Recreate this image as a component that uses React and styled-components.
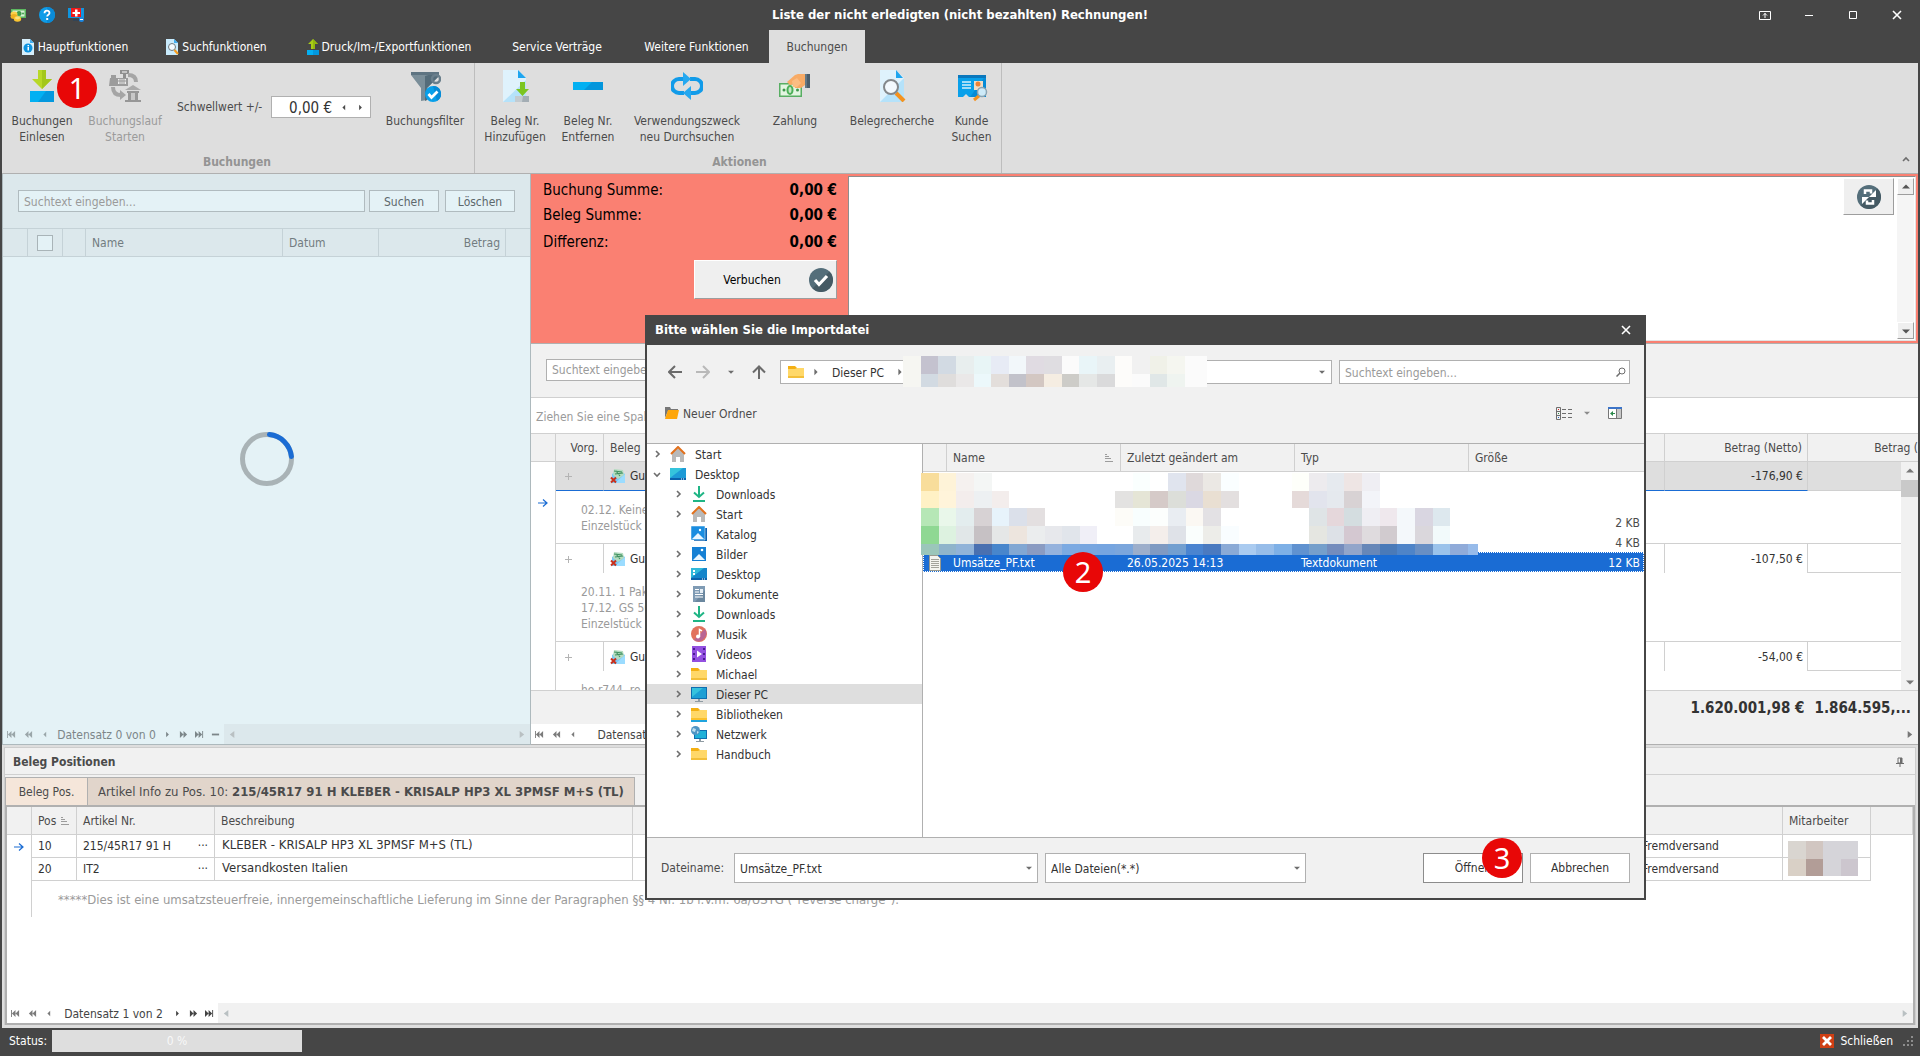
import React from 'react';
import styled, { createGlobalStyle, css } from 'styled-components';

const dark = '#464646';
const chrome = '#dedede';
const panel = '#f1f1f1';
const line = '#d0d0d0';
const frame = '#b0b0b0';
const text = '#4b4b4b';
const muted = '#9a9a9a';
const blue = '#1a6cd4';
const salmon = '#fa8072';
const busyHead = '#dce8ec';
const busyBody = '#e4f2f6';
const busyLine = '#c5d2d7';
const fontFamily = "'DejaVu Sans Condensed', 'Noto Sans', sans-serif";

/* ---------- icons ---------- */

const Svg = ({ w = 16, h = w, box, children }) => (
  <svg
    width={w}
    height={h}
    viewBox={box || `0 0 ${w} ${h}`}
    fill="none"
    aria-hidden="true"
  >
    {children}
  </svg>
);

const MoneyIcon = () => (
  <Svg>
    <path d="M1 2h15v9H1z" fill="#5cb860" />
    <path d="M2.500 3.500h12v6h-12z" fill="#d9f2d6" />
    <circle cx="9" cy="6.500" r="2.500" fill="#3f9d4b" />
    <circle cx="13" cy="6.500" r="1" fill="#3f9d4b" />
    <ellipse cx="4" cy="7" rx="3.500" ry="2.500" fill="#fbd04a" />
    <ellipse cx="4" cy="9.500" rx="3.500" ry="2.500" fill="#eeb022" />
    <ellipse cx="7.500" cy="12" rx="3.700" ry="2.700" fill="#fbc531" />
    <ellipse cx="7.500" cy="11" rx="2.500" ry="1.400" fill="#fde07c" />
  </Svg>
);

const HelpIcon = () => (
  <Svg>
    <circle cx="8" cy="8" r="8" fill="#0e9ce8" />
    <path d="M8 0a8 8 0 0 1 0 16z" fill="#0a8ad6" />
    <path
      d="M5.500 6.200c0-3.400 5-3.300 5-.3 0 1.800-2.300 1.900-2.300 3.600"
      stroke="#fff"
      strokeWidth="1.800"
    />
    <path d="M7.200 11h2v2h-2z" fill="#fff" />
  </Svg>
);

const SupportIcon = () => (
  <Svg>
    <path d="M0 1h16v10H0z" fill="#0f95df" />
    <path d="M5 12h6v2H5z" fill="#345" />
    <path d="M3 1h10v9H3z" fill="#f01818" />
    <path d="M7 2.500h2.500V5H12v2H9.500v2.500H7V7H4.500V5H7z" fill="#fff" />
    <circle cx="13.500" cy="12.500" r="2.500" fill="#1b86e0" />
    <path d="M12 12h3v1h-3z" fill="#fff" />
  </Svg>
);

const PageInfoIcon = () => (
  <Svg>
    <path d="M1 0h8l4 4v12H1z" fill="#d6effc" />
    <path d="M9 0l4 4H9z" fill="#41aef0" />
    <circle cx="7" cy="9" r="4.500" fill="#0c93e0" />
    <path d="M6.500 6h1.500v1.200H6.500zM6.500 8h1.500v3.500H6.500z" fill="#fff" />
  </Svg>
);

const PageSearchIcon = () => (
  <Svg>
    <path d="M1 0h8l4 4v12H1z" fill="#c9ebfc" />
    <path d="M9 0l4 4H9z" fill="#41aef0" />
    <circle cx="7" cy="8" r="3.500" fill="#f4fbff" stroke="#6d7a80" />
    <path d="M9.500 11l3.500 4" stroke="#f59a1b" strokeWidth="2.200" />
  </Svg>
);

const ExportIcon = () => (
  <Svg>
    <path d="M8 0l5 5H10v5H6V5H3z" fill="#a8cc18" />
    <path d="M8 0l5 5H10v5H8z" fill="#93b80d" />
    <path d="M2 11h6v5H2z" fill="#03b0f3" />
    <path d="M8 11h6v5H8z" fill="#0398de" />
  </Svg>
);

const ImportIcon = () => (
  <Svg w={32}>
    <path d="M12 0h8v9h6l-10 10L6 9h6z" fill="#b8d826" />
    <path d="M16 0h4v9h6l-10 10z" fill="#a3c71b" />
    <path d="M4 21h24v11H4z" fill="#02b0f2" />
    <path d="M20 21h8v11H12z" fill="#0398de" />
  </Svg>
);

const RunIcon = () => (
  <Svg w={32}>
    <path d="M11 0h9v4h-9zM14 4h3v4h-3z" fill="#8f8f8f" />
    <path d="M13 1h5v2h-5z" fill="#c4c4c4" />
    <path d="M2 5h5v3H2zM1 8h18v8H0z" fill="#9c9c9c" />
    <path d="M9 9h8v5H9z" fill="#ededed" />
    <path d="M11 9v5M13 9v5M15 9v5M9 11h8" stroke="#999" />
    <path d="M19 5c6 0 8 3 8 7" stroke="#a5a5a5" strokeWidth="4" />
    <path d="M4 17c0 6 3 8 8 8" stroke="#a5a5a5" strokeWidth="4" />
    <path d="M11 20l6 5-6 5z" fill="#a5a5a5" />
    <path d="M24 15l8 5H16z" fill="#aaa" />
    <path d="M18 21h12v2H18zM19 23h3v7h-3zM26 23h3v7h-3zM16 30h16v2H16z" fill="#979797" />
    <path d="M22 23h4v7h-4z" fill="#c8c8c8" />
  </Svg>
);

const FilterIcon = () => (
  <Svg w={32}>
    <path d="M2 2h28v4L18 18v12l-6 1V18L2 5z" fill="#7a8e99" />
    <path d="M16 6l14-4v4L18 18v12l-2 1z" fill="#546c7a" />
    <path d="M2 2h28v3H2z" fill="#5e7482" />
    <circle cx="27" cy="9" r="4" stroke="#6a7f8c" strokeWidth="2.500" />
    <circle cx="24" cy="24" r="8" fill="#08a0ea" />
    <path d="M24 16a8 8 0 0 1 4 15z" fill="#078bd6" />
    <path d="M19.500 24l3 3.500 6-6" stroke="#fff" strokeWidth="2.800" />
  </Svg>
);

const PageAddIcon = () => (
  <Svg w={32}>
    <path d="M4 0h15l8 8v24H4z" fill="#dff2fc" />
    <path d="M27 10v22H4z" fill="#b5e2fa" />
    <path d="M19 0l8 8h-8z" fill="#1ea5ef" />
    <path d="M21 12h5v7h4l-6.500 7L17 19h4z" fill="#7cc520" />
    <path d="M16 26h14v6H16z" fill="#c3cbd0" />
    <path d="M24 26h6v6h-7z" fill="#a3adb4" />
  </Svg>
);

const MinusIcon = () => (
  <Svg w={32}>
    <path d="M1 12h30v8H1z" fill="#02b0f2" />
    <path d="M20 12h11v8H12z" fill="#0396dc" />
  </Svg>
);

const LoopIcon = () => (
  <Svg w={32}>
    <path d="M13 23H8a7 7 0 0 1 0-14h6" stroke="#119be9" strokeWidth="4" />
    <path d="M19 9h5a7 7 0 0 1 0 14h-5" stroke="#119be9" strokeWidth="4" />
    <path d="M12 2l8 7-8 7z" fill="#25a8f0" />
    <path d="M20 16l-8 7 8 7z" fill="#25a8f0" />
  </Svg>
);

const PaymentIcon = () => (
  <Svg w={32}>
    <path d="M0 13h23v14H0z" fill="#58ae63" />
    <path d="M1.500 14.500h20v11h-20z" fill="#e3f5e1" />
    <ellipse cx="11" cy="20" rx="3.500" ry="5" fill="#4caf58" />
    <ellipse cx="11" cy="20" rx="1.500" ry="3" fill="#c6e8c6" />
    <circle cx="5" cy="20" r="1.500" fill="#3d984b" />
    <circle cx="18.500" cy="20" r="1.500" fill="#3d984b" />
    <path d="M8 12l8-7 3-1h7v11l-4 3h-6l-1-4-4 1z" fill="#f8ab66" />
    <path d="M13 11l5-3 4 5-4 4h-4z" fill="#fbbd83" />
    <path d="M26 4h5v14h-5z" fill="#4a5d6b" />
    <path d="M26 4h2v14h-2z" fill="#647886" />
  </Svg>
);

const ResearchIcon = () => (
  <Svg w={32}>
    <path d="M4 0h16l8 8v24H4z" fill="#dff2fc" />
    <path d="M28 8v24H4z" fill="#b5e2fa" />
    <path d="M20 0l7 8h-7z" fill="#1ea5ef" />
    <path d="M20 23l8 8" stroke="#f5921e" strokeWidth="4" />
    <circle cx="15" cy="17" r="7" fill="#f3f9fd" stroke="#84888b" strokeWidth="2" />
  </Svg>
);

const CustomerIcon = () => (
  <Svg w={32}>
    <path d="M2 5h28v22H2z" fill="#09a0ea" />
    <path d="M30 5v22H14z" fill="#078bd6" />
    <path d="M2 5h28v3H2z" fill="#0b78bd" />
    <path d="M6 12h9M6 15h9M6 18h9" stroke="#d6f0fc" strokeWidth="1.500" />
    <path d="M18 11h9v9h-9z" fill="#f2ddc5" />
    <circle cx="22" cy="14" r="2.500" fill="#ee8336" />
    <path d="M7 27l3-3 3 3" fill="#dedede" />
    <path d="M18 30l6-5" stroke="#f5921e" strokeWidth="3" />
    <circle cx="26" cy="22" r="4.500" fill="#cdeaf8" stroke="#8aa4b3" strokeWidth="1.500" />
  </Svg>
);

const RibbonModeIcon = () => (
  <Svg w={12} h={10}>
    <path d="M.5 1.500h11v8H.5z" stroke="#fff" />
    <path d="M6 3v5M4 5.500l2-2 2 2" stroke="#fff" />
  </Svg>
);
const MinimizeIcon = () => (
  <Svg w={10}>
    <path d="M1 5.500h8" stroke="#fff" />
  </Svg>
);
const MaximizeIcon = () => (
  <Svg w={10}>
    <path d="M1.500 1.500h7v7h-7z" stroke="#fff" />
  </Svg>
);
const CloseIcon = () => (
  <Svg w={10}>
    <path d="M1 1l8 8M9 1L1 9" stroke="#fff" strokeWidth="1.600" />
  </Svg>
);

const CheckCircleIcon = () => (
  <Svg w={24}>
    <circle cx="12" cy="12" r="12" fill="#546e7a" />
    <path d="M20.500 3.500a12 12 0 0 1-17 17z" fill="#455a64" />
    <path d="M6 12l4 4.500 8-8.500" stroke="#fff" strokeWidth="3.200" />
  </Svg>
);

const RefreshIcon = () => (
  <Svg w={24}>
    <circle cx="12" cy="12" r="12" fill="#546e7a" />
    <path d="M20.500 3.500a12 12 0 0 1-17 17z" fill="#455a64" />
    <path d="M8 9V5.500h6v3" stroke="#fff" strokeWidth="2.500" />
    <path d="M12 12h7V5z" fill="#fff" />
    <path d="M16 15v3.500h-6v-3" stroke="#fff" strokeWidth="2.500" />
    <path d="M12 12H5v7z" fill="#fff" />
  </Svg>
);

const glyphs = {
  first: 'M0 0h1v8H0zM5 0v8L1 4zM9 0v8L5 4z',
  prevPage: 'M5 0v8L1 4zM9 0v8L5 4z',
  prev: 'M6 0v8L2 4z',
  next: 'M3 0v8l4-4z',
  nextPage: 'M1 0v8l4-4zM5 0v8l4-4z',
  last: 'M0 0v8l4-4zM4 0v8l4-4zM8 0h1v8H8z',
  minus: 'M1 3h8v2H1z',
  up: 'M0 6h10L5 1z',
  down: 'M0 2h10L5 7z',
  left: 'M7 0v8L2 4z',
  right: 'M3 0v8l5-4z',
};
const Glyph = ({ name, size = 8, color = 'currentColor' }) => (
  <Svg w={size} h={size} box="0 0 10 8">
    <path d={glyphs[name]} fill={color} />
  </Svg>
);

const SortIcon = () => (
  <Svg w={9} h={8}>
    <path d="M0 .5h2M0 2.500h4M0 4.500h6M0 7.500h8" stroke="#9c9c9c" />
  </Svg>
);

const ArrowIcon = ({ color = '#6b6b6b', dir = 'left' }) => (
  <Svg w={14}>
    <path
      d={
        dir === 'up'
          ? 'M7 14V2M1 7.500l6-6 6 6'
          : dir === 'left'
          ? 'M14 7H1M7 1L1 7l6 6'
          : 'M0 7h13M7 1l6 6-6 6'
      }
      stroke={color}
      strokeWidth="2"
    />
  </Svg>
);

const RowArrow = () => (
  <Svg w={10} h={8}>
    <path d="M0 4h9M5 .5L9 4 5 7.500" stroke={blue} strokeWidth="1.200" />
  </Svg>
);

const ChevronIcon = ({ open }) => (
  <Svg w={8}>
    <path
      d={open ? 'M1 3l3 3 3-3' : 'M3 1l3 3-3 3'}
      stroke="#6d6d6d"
      strokeWidth="1.600"
    />
  </Svg>
);

const SearchIcon = () => (
  <Svg w={10}>
    <circle cx="6" cy="4" r="3" stroke="#6d6d6d" />
    <path d="M4 6L.5 9.500" stroke="#6d6d6d" strokeWidth="1.500" />
  </Svg>
);

const MailIcon = () => (
  <Svg>
    <path d="M2 6l6-4 7 4v9H2z" fill="#7cc8f4" />
    <path d="M15 6v9H5z" fill="#9bdcff" />
    <path d="M4 1l9 1 1 5-6 4-5-4z" fill="#b5dcc0" />
    <path d="M4 3l8 1M5 6l8-1M6 3l4 5" stroke="#3f9160" strokeWidth="1.200" />
    <path d="M1 9.500l5 5M6 9.500l-5 5" stroke="#c9301c" strokeWidth="2" />
  </Svg>
);

const PlusIcon = () => (
  <Svg w={8}>
    <path d="M4.500 1v7M1 4.500h7" stroke="#b4b4b4" />
  </Svg>
);

const NewFolderIcon = () => (
  <Svg w={14} h={12}>
    <path d="M0 0h5l1 2h7v2H3L0 11z" fill="#777" />
    <path d="M3 3h11l-2 9H0z" fill="#fea60a" />
  </Svg>
);

const ViewIcon = () => (
  <Svg w={17} h={13}>
    <path d="M.5 .5h4v12h-4zM.5 4.500h4M.5 8.500h4" stroke="#6d6d6d" />
    <path d="M2 2h1v1H2z" fill="#d22" />
    <path d="M2 6h1v1H2z" fill="#2a8a4a" />
    <path d="M2 10h1v1H2z" fill="#26c" />
    <path d="M6 2.500h4M12 2.500h4M6 6.500h4M12 6.500h4M6 10.500h4M12 10.500h4" stroke="#6d6d6d" />
  </Svg>
);

const PreviewIcon = () => (
  <Svg w={14} h={12}>
    <path d="M.5 1.500h13v10H.5z" fill="#fff" stroke="#777" />
    <path d="M9 2h4v9H9z" fill="#c8c8c8" />
    <path d="M8.500 2v9" stroke="#777" />
    <path d="M0 0h14v2H0z" fill="#3c74c8" />
    <path d="M2 6.500l3-2.500v5zM4 6h3v1H4z" fill="#2b8a4b" />
  </Svg>
);

const PinIcon = () => (
  <Svg w={8} h={10}>
    <path d="M2 1h4v5H2z" stroke="#6d6d6d" />
    <path d="M4 1h2v5H4zM0 6h8v1H0zM3.500 7h1v3h-1z" fill="#6d6d6d" />
  </Svg>
);

const ExitIcon = () => (
  <Svg w={14}>
    <path d="M0 0h14v14H0z" fill="#cf3f13" />
    <path d="M3 3l8 8M11 3l-8 8" stroke="#fff" strokeWidth="2.800" />
  </Svg>
);

const GripIcon = () => (
  <Svg w={10}>
    <path
      d="M8 0h2v2H8zM8 4h2v2H8zM4 4h2v2H4zM8 8h2v2H8zM4 8h2v2H4zM0 8h2v2H0z"
      fill="#8d8d8d"
    />
  </Svg>
);

const FolderIcon = ({ lib }) => (
  <Svg>
    <path d="M0 2h7l2 2h7v10H0z" fill="#f4b013" />
    <path d="M0 5h7l2-1h7v9H0z" fill="#ffd869" />
    <path d="M0 12h16v2H0z" fill={lib ? '#fbc12d' : '#f3bf3a'} />
    {lib && <path d="M0 14h16v2H0z" fill="#20a4de" />}
  </Svg>
);

const treeIcons = {
  home: () => (
    <Svg>
      <path d="M2 7l6-5 6 5v9h-4v-5H6v5H2z" fill="#b9b9b9" />
      <path d="M1 8l7-7 7 7" stroke="#e2711d" strokeWidth="2" />
    </Svg>
  ),
  desktop: () => (
    <Svg>
      <path d="M0 2h16v12H0z" fill="#1d9ad6" />
      <path d="M0 2h13L0 12z" fill="#35c4dc" />
      <path d="M0 12h16v2H0z" fill="#0b62ac" />
      <path d="M11 12.500h1v1h-1zM13 12.500h1v1h-1z" fill="#fff" />
    </Svg>
  ),
  desktop2: () => (
    <Svg>
      <path d="M0 2h16v12H0z" fill="#1585ca" />
      <path d="M0 2h13L0 12z" fill="#31b9da" />
      <path d="M0 12h16v2H0z" fill="#0b62ac" />
      <path d="M2 4h2v2H2zM2 7h2v2H2z" fill="#fff" />
      <path d="M11 12.500h1v1h-1zM13 12.500h1v1h-1z" fill="#fff" />
    </Svg>
  ),
  download: () => (
    <Svg>
      <path d="M8 0v11M3 6.500L8 11l5-4.500M2 15h12" stroke="#1fb585" strokeWidth="2" />
    </Svg>
  ),
  catalog: () => (
    <Svg>
      <path d="M3 2h13v13H3z" fill="#0d62b0" />
      <path d="M0 0h14v14H0z" fill="#1a8de0" stroke="#fff" strokeWidth=".5" />
      <path d="M1 13l6-6 6 6z" fill="#e9f6ff" />
      <circle cx="9" cy="4" r="1.200" fill="#fff" />
    </Svg>
  ),
  picture: () => (
    <Svg>
      <path d="M1 1h14v14H1z" fill="#1580d4" />
      <path d="M2 14l6-6 6 6z" fill="#e9f6ff" />
      <circle cx="11" cy="4" r="1.300" fill="#fff" />
    </Svg>
  ),
  document: () => (
    <Svg>
      <path d="M2 0h12v16H2z" fill="#7f9bb4" />
      <path d="M14 4v12H4z" fill="#6b879f" />
      <path d="M4 3.500h4M4 6h4M4 8.500h8M4 11h8" stroke="#fff" strokeWidth="1.200" />
      <path d="M9 3h3v4H9z" fill="#e6eef5" />
    </Svg>
  ),
  music: () => (
    <Svg>
      <circle cx="8" cy="8" r="8" fill="#e2725d" />
      <path d="M14 3a8 8 0 0 1-11 11z" fill="#b96594" />
      <circle cx="7" cy="10.500" r="2" fill="#fff" />
      <path d="M8.500 11V3.500l2.500 1.300" stroke="#fff" strokeWidth="1.500" />
    </Svg>
  ),
  video: () => (
    <Svg>
      <path d="M1 0h14v16H1z" fill="#9350e0" />
      <path d="M2 2h2v2H2zM2 7h2v2H2zM2 12h2v2H2zM12 2h2v2h-2zM12 7h2v2h-2zM12 12h2v2h-2z" fill="#4b1d94" />
      <path d="M6 4.500l5 3.500-5 3.500z" fill="#fff" />
    </Svg>
  ),
  folder: () => <FolderIcon />,
  library: () => <FolderIcon lib />,
  pc: () => (
    <Svg>
      <path d="M0 1h16v12H0z" fill="#0f6eb0" />
      <path d="M1 2h14v10H1z" fill="#1d9fd4" />
      <path d="M1 2h11L1 11z" fill="#36c2dd" />
      <path d="M7 13h2v2H7zM4 15h8v1H4z" fill="#8f9ba3" />
    </Svg>
  ),
  network: () => (
    <Svg>
      <path d="M3 4h13v9H3z" fill="#0f6eb0" />
      <path d="M4 5h11v7H4z" fill="#1fb0d8" />
      <path d="M8 13h2v2H8zM5 15h8v1H5z" fill="#8f9ba3" />
      <circle cx="4.500" cy="4.500" r="4.500" fill="#4f95c4" />
      <path d="M2 2l3 1-1 3-3-1zM6 5l2 1-2 2z" fill="#bfe0f0" />
    </Svg>
  ),
};

const TextFileIcon = () => (
  <Svg w={12} h={16}>
    <path d="M.5 .5h8l3 3v12H.5z" fill="#f4f4ef" stroke="#9a9a8e" />
    <path d="M2 4.500h8M2 6.500h8M2 8.500h8M2 10.500h8M2 12.500h8" stroke="#a3a39b" />
  </Svg>
);

/* ---------- data ---------- */

const tabs = [
  { label: 'Hauptfunktionen', icon: PageInfoIcon, width: 143 },
  { label: 'Suchfunktionen', icon: PageSearchIcon, width: 140 },
  { label: 'Druck/Im-/Exportfunktionen', icon: ExportIcon, width: 204 },
  { label: 'Service Verträge', width: 134 },
  { label: 'Weitere Funktionen', width: 145 },
  { label: 'Buchungen', width: 96, active: true },
];

const actions = [
  { lines: ['Beleg Nr.', 'Hinzufügen'], icon: PageAddIcon, width: 72 },
  { lines: ['Beleg Nr.', 'Entfernen'], icon: MinusIcon, width: 74 },
  { lines: ['Verwendungszweck', 'neu Durchsuchen'], icon: LoopIcon, width: 124 },
  { lines: ['Zahlung'], icon: PaymentIcon, width: 92 },
  { lines: ['Belegrecherche'], icon: ResearchIcon, width: 102 },
  { lines: ['Kunde', 'Suchen'], icon: CustomerIcon, width: 57 },
];

const sums = ['Buchung Summe:', 'Beleg Summe:', 'Differenz:'];

const bookings = [
  {
    net: '-176,90 €',
    gross: '-210,51 €',
    selected: true,
    notes: ['02.12. Keine Rückmeldung', 'Einzelstück'],
  },
  {
    net: '-107,50 €',
    gross: '-127,93 €',
    notes: ['20.11. 1 Paket', '17.12. GS 50', 'Einzelstück'],
  },
  { net: '-54,00 €', gross: '-64,26 €', notes: ['ho r744, ro'] },
];

const positions = [
  { pos: 10, article: '215/45R17 91 H', name: 'KLEBER - KRISALP HP3 XL 3PMSF M+S (TL)', current: true },
  { pos: 20, article: 'IT2', name: 'Versandkosten Italien' },
];

const tree = [
  { label: 'Start', icon: 'home' },
  { label: 'Desktop', icon: 'desktop', open: true },
  { label: 'Downloads', icon: 'download', sub: true },
  { label: 'Start', icon: 'home', sub: true },
  { label: 'Katalog', icon: 'catalog', sub: true, leaf: true },
  { label: 'Bilder', icon: 'picture', sub: true },
  { label: 'Desktop', icon: 'desktop2', sub: true },
  { label: 'Dokumente', icon: 'document', sub: true },
  { label: 'Downloads', icon: 'download', sub: true },
  { label: 'Musik', icon: 'music', sub: true },
  { label: 'Videos', icon: 'video', sub: true },
  { label: 'Michael', icon: 'folder', sub: true },
  { label: 'Dieser PC', icon: 'pc', sub: true, selected: true },
  { label: 'Bibliotheken', icon: 'library', sub: true },
  { label: 'Netzwerk', icon: 'network', sub: true },
  { label: 'Handbuch', icon: 'folder', sub: true },
];

// colour rows of the censored areas, '-' leaves the cell empty
const pathMosaic = [
  'f6f6f2 c4c2cf d2dae3 e8eeee e8f5f6 e7ebf5 f2f7fa e0dbe2 dfdde1 fbfbfb e9f5f8 e9eff1 fdfcfa f1f1f1 f0f1e8 f5f6f0 fbfbfb',
  'f6f6f2 d2dae2 dfdddc eae8e8 ecf8fb e3dedb c2c2ca d3c7c2 f5ede2 cdccc8 e5e7e6 dadadb fdfcfa fbfbfb e0e7e7 eff4f0 fbfbfb',
];

const fileMosaic = [
  'f8dd9b fef3d8 f5f1ef f4f6f5 - - - - - - - - fafffe - e0e4ee dfd9da ebe8e4 fafeff - - - fefffa edebee e6eaef eee5e4 efeef3 - - - - - -',
  'fff1c5 fff4da f3edec edf0f2 f3edec - - - - - - e3e2e1 e5e5d6 d5cac8 dcded9 dad8e3 e9dfd2 e3dfdf - - - e5dad9 e2e4ed e5e9ee d8d2d4 f3f4f9 - - - - - -',
  'b6e7b6 e9f7ea e3edee d7d2d4 e7f3fb dbe0ea e3dfe0 - - - - fdfcf8 f8fefe fcfefd e9edf2 fbf8f3 e3e1e4 - - - - - dfe4e6 e5d7db d4dde0 efeef3 efe8ed f4f8fb d9d6e1 dde8ee - -',
  '8fd893 ddf2e0 e1e7e8 c6c1c4 e5e7e7 ede5de ebedee e7e8ec e1e5eb f0eff7 - - e8ebed f4eeeb dfe2e8 fafefd edede9 f9fdff - - - - e5e6e1 dde1e7 d4c8d1 dfdbde d1cbcf f4f8fb dad7dc f2fafb - -',
  '9bc6ba 8fb4cb 91b3d8 4a70b0 4886cc 82a7d3 8a9bc2 95b2dd 7caae2 78a6e0 76a5e0 7ba6dc 9caecb 7f9ac2 729fd0 4a84d0 4a7ac0 8aaad6 aacbf0 97bde9 7eb0e6 6092d0 759fcb 748cbd 92a5ca 6787b8 4a7ab8 4e84c8 688fc4 9bc3eb 90abd9 97bbea',
];

const staffMosaic = ['d9d5d0 d1c6c1 d5d4d9 d5d4d9', 'd9d0c6 b29d97 d5d4d9 ccc6ce'];

/* ---------- pieces ---------- */

const Mosaic = ({ as: Box, rows }) => (
  <Box aria-hidden="true">
    {rows
      .join(' ')
      .split(' ')
      .map((color, i) => (
        <span
          key={i}
          style={{ background: color === '-' ? 'transparent' : `#${color}` }}
        />
      ))}
  </Box>
);

const RecordNav = ({ label, width, muted: isMuted, minus, onlyBack }) => (
  <Nav $muted={isMuted}>
    {['first', 'prevPage', 'prev'].map(name => (
      <NavButton key={name} aria-label={name} $faded>
        <Glyph name={name} size={name === 'prev' ? 7 : 9} />
      </NavButton>
    ))}
    <NavLabel $width={width}>{label}</NavLabel>
    {!onlyBack &&
      ['next', 'nextPage', 'last'].map(name => (
        <NavButton key={name} aria-label={name} $small>
          <Glyph name={name} size={name === 'next' ? 7 : 9} />
        </NavButton>
      ))}
    {minus && (
      <NavButton aria-label="minus" $small>
        <Glyph name="minus" size={9} />
      </NavButton>
    )}
    <ScrollTrack $muted={isMuted} $active={onlyBack}>
      <Glyph name="left" size={9} />
      <Glyph name="right" size={9} />
    </ScrollTrack>
  </Nav>
);

const RibbonItem = ({ lines, icon: Icon, width, disabled }) => (
  <RibbonButton $width={width} disabled={disabled}>
    <Icon />
    <span>
      {lines.map(l => (
        <div key={l}>{l}</div>
      ))}
    </span>
  </RibbonButton>
);

const ImportDialog = () => (
  <Dialog role="dialog" aria-label="Bitte wählen Sie die Importdatei">
    <DialogTitle>
      <b>Bitte wählen Sie die Importdatei</b>
      <IconButton aria-label="Schließen">
        <CloseIcon />
      </IconButton>
    </DialogTitle>
    <PathRow>
      <PathButtons>
        <IconButton aria-label="Zurück">
          <ArrowIcon />
        </IconButton>
        <IconButton aria-label="Vorwärts">
          <ArrowIcon dir="right" color="#b9b9b9" />
        </IconButton>
        <IconButton aria-label="Verlauf">
          <Glyph name="down" size={6} color="#6d6d6d" />
        </IconButton>
        <IconButton aria-label="Nach oben">
          <ArrowIcon dir="up" />
        </IconButton>
      </PathButtons>
      <PathBox>
        <FolderIcon />
        <Glyph name="next" color="#6d6d6d" />
        <span>Dieser PC</span>
        <Glyph name="next" color="#6d6d6d" />
        <Mosaic as={PathMosaic} rows={pathMosaic} />
        <PathCaret>
          <Glyph name="down" size={6} color="#6d6d6d" />
        </PathCaret>
      </PathBox>
      <SearchBox>
        <input aria-label="Suchtext" placeholder="Suchtext eingeben..." />
        <SearchIcon />
      </SearchBox>
    </PathRow>
    <ToolRow>
      <ToolButton>
        <NewFolderIcon />
        <span>Neuer Ordner</span>
      </ToolButton>
      <ToolIcons>
        <IconButton aria-label="Ansicht">
          <ViewIcon />
        </IconButton>
        <IconButton aria-label="Ansicht wählen">
          <Glyph name="down" size={6} color="#8b8b8b" />
        </IconButton>
        <IconButton aria-label="Vorschau">
          <PreviewIcon />
        </IconButton>
      </ToolIcons>
    </ToolRow>
    <Browser>
      <Tree>
        {tree.map(({ label, icon, open, sub, leaf, selected }, i) => {
          const Icon = treeIcons[icon];
          return (
            <TreeRow key={i} $sub={sub} $selected={selected}>
              <TreeToggle>{!leaf && <ChevronIcon open={open} />}</TreeToggle>
              <Icon />
              <span>{label}</span>
            </TreeRow>
          );
        })}
      </Tree>
      <FileArea>
        <FileTable>
          <colgroup>
            <col width="24" />
            <col width="174" />
            <col width="174" />
            <col width="174" />
            <col />
          </colgroup>
          <thead>
            <tr>
              <th />
              <th>
                <SortHead>
                  Name
                  <SortIcon />
                </SortHead>
              </th>
              <th>Zuletzt geändert am</th>
              <th>Typ</th>
              <th>Größe</th>
            </tr>
          </thead>
          <tbody>
            {['', '', '2 KB', '4 KB'].map((size, i) => (
              <tr key={i}>
                <td colSpan="4" />
                <SizeCell>{size}</SizeCell>
              </tr>
            ))}
            <SelectedFile>
              <td>
                <TextFileIcon />
              </td>
              <td>Umsätze_PF.txt</td>
              <td>26.05.2025 14:13</td>
              <td>Textdokument</td>
              <SizeCell>12 KB</SizeCell>
            </SelectedFile>
          </tbody>
        </FileTable>
        <Mosaic as={FileMosaic} rows={fileMosaic} />
      </FileArea>
    </Browser>
    <DialogFooter>
      <label htmlFor="filename">Dateiname:</label>
      <NameBox>
        <input id="filename" defaultValue="Umsätze_PF.txt" />
        <Glyph name="down" size={6} color="#6d6d6d" />
      </NameBox>
      <TypeBox>
        <select aria-label="Dateityp">
          <option>Alle Dateien(*.*)</option>
        </select>
        <Glyph name="down" size={6} color="#6d6d6d" />
      </TypeBox>
      <DialogButton $primary>Öffnen</DialogButton>
      <DialogButton>Abbrechen</DialogButton>
    </DialogFooter>
  </Dialog>
);

const App = () => (
  <Page>
    <GlobalStyle />
    <TitleBar>
      <QuickIcons>
        <MoneyIcon />
        <HelpIcon />
        <SupportIcon />
      </QuickIcons>
      <WindowTitle>Liste der nicht erledigten (nicht bezahlten) Rechnungen!</WindowTitle>
      <WindowButtons>
        <IconButton aria-label="Menüband"><RibbonModeIcon /></IconButton>
        <IconButton aria-label="Minimieren"><MinimizeIcon /></IconButton>
        <IconButton aria-label="Maximieren"><MaximizeIcon /></IconButton>
        <IconButton aria-label="Schließen"><CloseIcon /></IconButton>
      </WindowButtons>
    </TitleBar>
    <TabBar>
      {tabs.map(({ label, icon: Icon, width, active }) => (
        <Tab key={label} $width={width} $active={active}>
          {Icon && <Icon />}
          {label}
        </Tab>
      ))}
    </TabBar>
    <Ribbon>
      <RibbonGroup>
        <RibbonItems>
          <RibbonItem lines={['Buchungen', 'Einlesen']} icon={ImportIcon} width={80} />
          <RibbonItem lines={['Buchungslauf', 'Starten']} icon={RunIcon} width={86} disabled />
          <Threshold>
            <label htmlFor="threshold">Schwellwert +/-</label>
            <SpinBox>
              <input id="threshold" defaultValue="0,00 €" />
              <Glyph name="prev" size={7} />
              <Glyph name="next" size={7} />
            </SpinBox>
          </Threshold>
          <RibbonItem lines={['Buchungsfilter']} icon={FilterIcon} width={94} />
        </RibbonItems>
        <GroupName>Buchungen</GroupName>
      </RibbonGroup>
      <RibbonGroup $inset>
        <RibbonItems>
          {actions.map(action => (
            <RibbonItem key={action.lines.join()} {...action} />
          ))}
        </RibbonItems>
        <GroupName>Aktionen</GroupName>
      </RibbonGroup>
      <Collapse aria-label="Menüband einklappen">
        <Svg w={8} h={6}>
          <path d="M1 5l3-3 3 3" stroke="#6d6d6d" strokeWidth="1.600" />
        </Svg>
      </Collapse>
    </Ribbon>

    <Main>
      <BusyPanel>
        <BusySearch>
          <input aria-label="Suchtext" placeholder="Suchtext eingeben..." />
          <BusyButton>Suchen</BusyButton>
          <BusyButton>Löschen</BusyButton>
        </BusySearch>
        <BusyTable>
          <colgroup>
            <col width="25" />
            <col width="35" />
            <col width="23" />
            <col width="197" />
            <col width="96" />
            <col width="127" />
            <col />
          </colgroup>
          <thead>
            <tr>
              <th />
              <CheckHead>
                <input type="checkbox" aria-label="Alle auswählen" />
              </CheckHead>
              <th />
              <th>Name</th>
              <th>Datum</th>
              <RightHead>Betrag</RightHead>
              <th />
            </tr>
          </thead>
        </BusyTable>
        <BusyBody>
          <Svg w={54}>
            <circle cx="27" cy="27" r="24.500" stroke="#a9b3b6" strokeWidth="5" />
            <path d="M29.500 2.600A24.500 24.500 0 0 1 51.400 24.500" stroke={blue} strokeWidth="5" strokeLinecap="round" />
          </Svg>
        </BusyBody>
        <RecordNav label="Datensatz 0 von 0" width={105} muted minus />
      </BusyPanel>

      <RightSide>
        <Totals>
          <Sums>
            <SumGrid>
              {sums.map(label => (
                <React.Fragment key={label}>
                  <dt>{label}</dt>
                  <dd>0,00 €</dd>
                </React.Fragment>
              ))}
            </SumGrid>
            <BookButton>
              <span>Verbuchen</span>
              <CheckCircleIcon />
            </BookButton>
          </Sums>
          <Memo>
            <RefreshButton aria-label="Aktualisieren">
              <RefreshIcon />
            </RefreshButton>
            <ClassicScroll>
              <ClassicButton aria-label="Nach oben"><Glyph name="up" /></ClassicButton>
              <ClassicButton aria-label="Nach unten"><Glyph name="down" /></ClassicButton>
            </ClassicScroll>
          </Memo>
        </Totals>
        <GridSearch>
          <input aria-label="Suchtext" placeholder="Suchtext eingeben..." />
        </GridSearch>
        <GroupHint>Ziehen Sie eine Spaltenüberschrift in diesen Bereich</GroupHint>
        <GridBody>
          <BookingTable>
            <colgroup>
              <col width="25" />
              <col width="48" />
              <col />
              <col width="143" />
              <col width="154" />
            </colgroup>
            <thead>
              <tr>
                <th />
                <RightHead>Vorg.</RightHead>
                <th>Beleg</th>
                <RightHead>Betrag (Netto)</RightHead>
                <RightHead>Betrag (Brutto)</RightHead>
              </tr>
            </thead>
            {bookings.map(({ net, gross, selected, notes }) => (
              <tbody key={net}>
                <BookingRow $selected={selected}>
                  <IndicatorCell rowSpan="2">{selected && <RowArrow />}</IndicatorCell>
                  <PlusCell>
                    <PlusIcon />
                  </PlusCell>
                  <td>
                    <DocCell>
                      <MailIcon />
                      Gutschrift
                    </DocCell>
                  </td>
                  <AmountCell>{net}</AmountCell>
                  <AmountCell>{gross}</AmountCell>
                </BookingRow>
                <NoteRow>
                  <td colSpan="4">
                    {notes.map(n => (
                      <div key={n}>{n}</div>
                    ))}
                  </td>
                </NoteRow>
              </tbody>
            ))}
          </BookingTable>
          <SlimScroll>
            <Glyph name="up" />
            <Thumb />
            <Glyph name="down" />
          </SlimScroll>
        </GridBody>
        <GridFooter>
          <span>1.620.001,98 €</span>
          <span>1.864.595,...</span>
        </GridFooter>
        <RecordNav label="Datensatz 1 von 2045" width={150} onlyBack />
      </RightSide>
    </Main>

    <Lower>
      <LowerPanel>
        <LowerTitle>
          <b>Beleg Positionen</b>
          <PinIcon />
        </LowerTitle>
        <DocTabs>
          <DocTab $active>Beleg Pos.</DocTab>
          <DocTab>
            Artikel Info zu Pos. 10: <b>215/45R17 91 H KLEBER - KRISALP HP3 XL 3PMSF M+S (TL)</b>
          </DocTab>
        </DocTabs>
        <PositionFrame>
          <PositionTable>
            <colgroup>
              <col width="25" />
              <col width="45" />
              <col width="138" />
              <col width="418" />
              <col />
              <col width="147" />
              <col width="88" />
              <col width="42" />
            </colgroup>
            <thead>
              <tr>
                <th />
                <th>
                  <SortHead>
                    Pos
                    <SortIcon />
                  </SortHead>
                </th>
                <th>Artikel Nr.</th>
                <th>Beschreibung</th>
                <th />
                <th />
                <th>Mitarbeiter</th>
                <th />
              </tr>
            </thead>
            <tbody>
              {positions.map(({ pos, article, name, current }) => (
                <tr key={pos}>
                  <ArrowCell>{current && <RowArrow />}</ArrowCell>
                  <td>{pos}</td>
                  <td>
                    <ArticleCell>
                      {article}
                      <span>···</span>
                    </ArticleCell>
                  </td>
                  <NameCell>{name}</NameCell>
                  <td />
                  <td>Fremdversand</td>
                  <StaffCell>{current && <Mosaic as={StaffMosaic} rows={staffMosaic} />}</StaffCell>
                  <RestCell />
                </tr>
              ))}
              <RemarkRow>
                <ArrowCell />
                <td colSpan="7">
                  *****Dies ist eine umsatzsteuerfreie, innergemeinschaftliche Lieferung im Sinne der
                  Paragraphen §§ 4 Nr. 1b i.V.m. 6a/USTG ("reverse charge").
                </td>
              </RemarkRow>
            </tbody>
          </PositionTable>
          <RecordNav label="Datensatz 1 von 2" width={111} />
        </PositionFrame>
      </LowerPanel>
    </Lower>

    <StatusBar>
      <StatusLabel>Status:</StatusLabel>
      <Progress>0 %</Progress>
      <ExitButton>
        <ExitIcon />
        Schließen
      </ExitButton>
      <GripIcon />
    </StatusBar>

    <ImportDialog />
    <Callout $x={57} $y={68}>1</Callout>
    <Callout $x={1063} $y={552}>2</Callout>
    <Callout $x={1482} $y={838}>3</Callout>
  </Page>
);

export default App;

/* ---------- styles ---------- */

const GlobalStyle = createGlobalStyle`
  * {
    box-sizing: border-box;
  }

  body {
    margin: 0;
    background: ${dark};
    font-family: ${fontFamily};
    font-size: 12px;
    line-height: 16px;
    color: ${text};
  }

  button, input, select {
    font: inherit;
    color: inherit;
    border: 0;
    padding: 0;
    margin: 0;
    background: none;
    border-radius: 0;
    outline: 0;
  }

  ::placeholder {
    color: ${muted};
    opacity: 1;
  }

  svg {
    display: block;
    flex-shrink: 0;
  }
`;

const Page = styled.div`
  position: relative;
  display: flex;
  flex-direction: column;
  min-height: 100vh;
  overflow: hidden;
`;

const TitleBar = styled.header`
  display: flex;
  align-items: center;
  height: 30px;
  color: #fff;
`;

const QuickIcons = styled.div`
  display: flex;
  flex: 1;
  gap: 13px;
  padding-left: 10px;
`;

const WindowTitle = styled.div`
  font-size: 13px;
  font-weight: bold;
`;

const WindowButtons = styled.div`
  display: flex;
  flex: 1;
  justify-content: flex-end;
  gap: 4px;
  padding: 0 3px 0 7px;

  button {
    width: 40px;
  }
`;

const IconButton = styled.button`
  display: flex;
  align-items: center;
  justify-content: center;
`;

const TabBar = styled.nav`
  display: flex;
  height: 33px;
  padding-left: 3px;
`;

const Tab = styled.button`
  display: flex;
  align-items: center;
  justify-content: center;
  gap: 1px;
  width: ${({ $width }) => $width}px;
  white-space: nowrap;
  color: ${({ $active }) => ($active ? text : '#fff')};
  background: ${({ $active }) => ($active ? chrome : 'none')};
`;

const Ribbon = styled.div`
  display: flex;
  height: 111px;
  margin: 0 2px;
  background: ${chrome};
  border-bottom: 1px solid ${frame};
`;

const RibbonGroup = styled.div`
  display: flex;
  flex-direction: column;
  padding-left: ${({ $inset }) => ($inset ? 4 : 0)}px;
  padding-right: ${({ $inset }) => ($inset ? 1 : 2)}px;
  border-right: 1px solid #bdbdbd;
`;

const RibbonItems = styled.div`
  display: flex;
  flex: 1;
`;

const RibbonButton = styled.button`
  display: flex;
  flex-direction: column;
  align-items: center;
  gap: 11px;
  width: ${({ $width }) => $width}px;
  padding-top: 7px;
  white-space: nowrap;

  &:disabled {
    color: #9b9b9b;
  }
`;

const GroupName = styled.div`
  padding-bottom: 3px;
  text-align: center;
  font-weight: bold;
  color: #949494;
`;

const Threshold = styled.div`
  display: flex;
  align-items: center;
  gap: 2px;
  width: 210px;
  height: 22px;
  margin-top: 33px;
  padding: 0 7px 0 9px;

  label {
    flex: 1;
    white-space: nowrap;
  }
`;

const SpinBox = styled.div`
  display: flex;
  align-items: center;
  gap: 9px;
  width: 100px;
  height: 22px;
  padding-right: 5px;
  background: #fff;
  border: 1px solid ${frame};

  input {
    width: 60px;
    padding-top: 1px;
    text-align: right;
    font-size: 15px;
    color: #333;
  }
`;

const Collapse = styled(IconButton)`
  align-self: flex-end;
  width: 24px;
  height: 28px;
  margin-left: auto;
`;

const Main = styled.main`
  display: flex;
  flex: 1 0 571px;
  height: 571px;
  margin: 0 2px;
  background: ${panel};
`;

const cellHead = css`
  padding: 0 6px;
  text-align: left;
  font-weight: normal;
  white-space: nowrap;
  background: ${panel};
  border-right: 1px solid ${line};
  border-bottom: 1px solid ${line};
`;

const tableBase = css`
  width: 100%;
  table-layout: fixed;
  border-collapse: separate;
  border-spacing: 0;

  td {
    padding: 0 6px;
    overflow: hidden;
    white-space: nowrap;
  }
`;

const BusyPanel = styled.section`
  display: flex;
  flex-direction: column;
  width: 529px;
  flex-shrink: 0;
  color: #727c80;
  background: ${busyBody};
  border: 1px solid #adb9bd;
  border-top: 0;
`;

const BusySearch = styled.div`
  display: flex;
  height: 54px;
  padding: 16px 15px 0;
  background: ${busyHead};

  input {
    flex: 1;
    height: 22px;
    margin-right: 4px;
    padding: 1px 5px 0;
    background: ${busyBody};
    border: 1px solid #b0bbbf;
  }
`;

const BusyButton = styled.button`
  width: 70px;
  height: 22px;
  padding-top: 1px;
  color: #5d686c;
  background: ${busyBody};
  border: 1px solid #b0bbbf;

  & + & {
    margin-left: 6px;
  }
`;

const BusyTable = styled.table`
  ${tableBase};

  th {
    ${cellHead};
    height: 29px;
    background: ${busyHead};
    border-color: ${busyLine};
    border-top: 1px solid ${busyLine};
  }

  th:last-child {
    border-right: 0;
  }
`;

const CheckHead = styled.th`
  && {
    padding: 0 9px;
  }

  input {
    display: block;
    width: 16px;
    height: 16px;
    appearance: none;
    background: ${busyBody};
    border: 1px solid #a9b4b8;
  }
`;

const RightHead = styled.th`
  && {
    padding-right: 5px;
    text-align: right;
  }
`;

const BusyBody = styled.div`
  display: flex;
  flex: 1;
  align-items: flex-start;
  justify-content: center;
  padding-top: 175px;
`;

const Nav = styled.div`
  display: flex;
  align-items: center;
  height: 20px;
  color: ${({ $muted }) => ($muted ? '#7c8689' : '#444')};
  background: ${({ $muted }) => ($muted ? 'transparent' : '#fff')};
`;

const NavButton = styled.button`
  display: flex;
  justify-content: center;
  width: ${({ $small }) => ($small ? 16 : 17)}px;
  opacity: ${({ $faded }) => ($faded ? 0.7 : 1)};
`;

const NavLabel = styled.span`
  width: ${({ $width }) => $width}px;
  padding-top: 1px;
  text-align: center;
  white-space: nowrap;
`;

const ScrollTrack = styled.div`
  display: flex;
  flex: 1;
  align-items: center;
  justify-content: space-between;
  align-self: stretch;
  margin-left: 1px;
  padding: 0 4px;
  color: ${({ $active }) => ($active ? '#777' : '#b9c0c2')};
  background: ${({ $muted }) => ($muted ? busyHead : panel)};
`;

const RightSide = styled.section`
  display: flex;
  flex: 1;
  flex-direction: column;
  min-width: 0;
  border-bottom: 1px solid ${frame};
`;

const Totals = styled.div`
  display: flex;
  height: 169px;
  padding: 2px 2px 2px 0;
  background: ${salmon};
`;

const Sums = styled.div`
  display: flex;
  flex-direction: column;
  width: 317px;
  padding: 1px 11px 0 12px;
  color: #000;
`;

const SumGrid = styled.dl`
  display: grid;
  grid-template-columns: 1fr auto;
  grid-template-rows: 25px 25px 30px;
  align-items: center;
  margin: 0 0 3px;
  font-size: 15px;

  dd {
    margin: 0;
    font-weight: bold;
  }
`;

const bevel = css`
  background: #efefef;
  border: 1px solid;
  border-color: #fff #9d9d9d #9d9d9d #fff;
`;

const BookButton = styled.button`
  ${bevel};
  display: flex;
  align-items: center;
  align-self: flex-end;
  width: 143px;
  height: 39px;
  padding-right: 3px;

  span {
    flex: 1;
  }
`;

const Memo = styled.div`
  display: flex;
  flex: 1;
  justify-content: flex-end;
  gap: 3px;
  padding: 1px;
  background: #fff;
  border: 1px solid;
  border-color: #8e8e8e #e3e3e3 #e3e3e3 #8e8e8e;
`;

const RefreshButton = styled.button`
  ${bevel};
  display: flex;
  align-items: center;
  justify-content: center;
  width: 51px;
  height: 37px;
`;

const ClassicScroll = styled.div`
  display: flex;
  flex-direction: column;
  justify-content: space-between;
  width: 17px;
  background: #f5f5f5;
`;

const ClassicButton = styled.button`
  ${bevel};
  display: flex;
  align-items: center;
  justify-content: center;
  height: 17px;
  color: #555;
`;

const GridSearch = styled.div`
  height: 55px;
  padding: 15px 15px 0;
  border-top: 1px solid ${frame};
  border-bottom: 1px solid ${line};

  input {
    width: 347px;
    height: 22px;
    padding: 0 5px;
    background: #fff;
    border: 1px solid ${frame};
  }
`;

const GroupHint = styled.div`
  height: 36px;
  padding: 11px 5px 0;
  color: ${muted};
  background: #fff;
  border-bottom: 1px solid ${line};
`;

const GridBody = styled.div`
  position: relative;
  flex: 1;
  min-height: 0;
  overflow: hidden;
  background: #fff;
  border-bottom: 1px solid ${line};
`;

const BookingTable = styled.table`
  ${tableBase};
  width: calc(100% + 44px);

  th {
    ${cellHead};
    height: 28px;
  }
`;

const BookingRow = styled.tr`
  td {
    height: 29px;
    border-right: 1px solid ${line};
  }

  td:last-child {
    border-bottom: 1px solid ${line};
  }

  ${({ $selected }) =>
    $selected &&
    css`
      td:not(:first-child) {
        background: ${chrome};
      }

      td:not(:first-child):not(:last-child) {
        border-bottom: 1px solid ${blue};
      }
    `};
`;

const IndicatorCell = styled.td`
  text-align: center;

  svg {
    margin: 0 auto;
  }
`;

const PlusCell = styled.td`
  && {
    padding-left: 8px;
  }
`;

const DocCell = styled.div`
  display: flex;
  align-items: center;
  gap: 4px;
  color: #333;
`;

const AmountCell = styled.td`
  text-align: right;
  color: #333;

  && {
    padding-right: 4px;
  }
`;

const NoteRow = styled.tr`
  td {
    padding: 11px 25px 9px;
    vertical-align: top;
    line-height: 16px;
    color: ${muted};
    border-bottom: 1px solid ${line};
  }
`;

const SlimScroll = styled.div`
  position: absolute;
  top: 28px;
  right: 0;
  bottom: 0;
  display: flex;
  flex-direction: column;
  align-items: center;
  gap: 5px;
  width: 17px;
  padding: 5px 0 4px;
  color: #777;
  background: ${panel};

  svg:last-child {
    margin-top: auto;
  }
`;

const Thumb = styled.div`
  width: 17px;
  height: 17px;
  background: #c9c9c9;
`;

const GridFooter = styled.div`
  display: flex;
  justify-content: flex-end;
  gap: 10px;
  height: 33px;
  padding: 9px 7px 0;
  font-size: 15px;
  font-weight: bold;
  color: #333;
`;

const Lower = styled.section`
  margin: 0 2px;
  padding: 2px 2px 3px;
  background: ${chrome};
`;

const LowerPanel = styled.div`
  background: ${panel};
  border: 1px solid #cdcdcd;
  border-bottom: 0;
`;

const LowerTitle = styled.div`
  display: flex;
  align-items: center;
  justify-content: space-between;
  height: 27px;
  padding: 2px 11px 0 8px;
  border-bottom: 1px solid ${line};
`;

const DocTabs = styled.div`
  display: flex;
  align-items: flex-end;
  height: 30px;
  padding-top: 2px;
`;

const DocTab = styled.button`
  min-width: 83px;
  height: 28px;
  padding: 0 10px;
  font-size: ${({ $active }) => ($active ? 12 : 13)}px;
  white-space: nowrap;
  background: ${({ $active }) => ($active ? '#f5e6da' : '#e1d5cb')};
  border: 1px solid ${frame};
  border-bottom: 0;

  & + & {
    border-left: 0;
  }
`;

const PositionFrame = styled.div`
  display: flex;
  flex-direction: column;
  height: 220px;
  background: #fff;
  border: 2px solid ${frame};
`;

const PositionTable = styled.table`
  ${tableBase};
  margin-bottom: auto;

  th {
    ${cellHead};
    height: 28px;
  }

  td {
    height: 23px;
    color: #333;
    border-right: 1px solid ${line};
    border-bottom: 1px solid ${line};
  }
`;

const SortHead = styled.div`
  display: flex;
  align-items: center;
  justify-content: space-between;
`;

const ArrowCell = styled.td`
  && {
    padding: 0 7px;
    border-bottom: 0;
  }
`;

const ArticleCell = styled.div`
  display: flex;
  justify-content: space-between;
`;

const NameCell = styled.td`
  && {
    padding: 0 7px 3px;
    font-size: 13px;
  }
`;

const StaffCell = styled.td`
  && {
    position: relative;
    overflow: visible;
  }
`;

const RestCell = styled.td`
  && {
    border: 0;
  }
`;

const RemarkRow = styled.tr`
  && td {
    height: 36px;
    color: ${muted};
    border-bottom: 0;
  }

  && td:last-child {
    padding: 2px 0 0 26px;
    font-size: 13px;
    border-right: 0;
  }
`;

const StatusBar = styled.footer`
  display: flex;
  align-items: center;
  height: 28px;
  padding: 0 7px 2px 9px;
  color: #fff;
`;

const StatusLabel = styled.span`
  width: 43px;
`;

const Progress = styled.div`
  width: 250px;
  height: 22px;
  line-height: 22px;
  text-align: center;
  color: #f8f8f8;
  background: ${chrome};
`;

const ExitButton = styled.button`
  display: flex;
  align-items: center;
  gap: 6px;
  margin: 0 10px 0 auto;
`;

const Dialog = styled.div`
  position: absolute;
  top: 315px;
  left: 645px;
  display: flex;
  flex-direction: column;
  width: 1001px;
  height: 585px;
  background: ${panel};
  border: 2px solid ${dark};
  border-top: 0;
`;

const DialogTitle = styled.div`
  display: flex;
  align-items: center;
  justify-content: space-between;
  height: 30px;
  padding: 0 13px 0 8px;
  font-size: 13px;
  color: #fff;
  background: ${dark};
`;

const PathRow = styled.div`
  display: flex;
  align-items: center;
  height: 54px;
  padding: 0 14px 0 21px;
`;

const PathButtons = styled.div`
  display: flex;
  align-items: center;
  gap: 14px;
  width: 112px;

  button:nth-child(3) {
    width: 14px;
  }
`;

const PathBox = styled.div`
  position: relative;
  display: flex;
  flex: 1;
  align-items: center;
  gap: 8px;
  height: 24px;
  margin-right: 7px;
  padding: 0 6px 0 7px;
  color: #333;
  background: #fff;
  border: 1px solid ${frame};

  span {
    padding: 1px 4px 0;
  }
`;

const PathCaret = styled.div`
  margin-left: auto;
`;

const PathMosaic = styled.div`
  position: absolute;
  top: -5px;
  left: 122px;
  display: grid;
  grid-template-columns: repeat(16, 1fr) 22px;
  grid-template-rows: 18px 13px;
  width: 304px;

  && span {
    padding: 0;
  }
`;

const field = css`
  display: flex;
  align-items: center;
  background: #fff;
  border: 1px solid ${frame};

  input,
  select {
    flex: 1;
    min-width: 0;
    padding: 1px 5px 0;
    color: #333;
    appearance: none;
  }
`;

const SearchBox = styled.div`
  ${field};
  width: 291px;
  height: 24px;
  padding-right: 3px;
`;

const ToolRow = styled.div`
  display: flex;
  align-items: center;
  justify-content: space-between;
  flex: 0 0 44px;
  padding: 0 22px 16px 18px;
`;

const ToolButton = styled.button`
  display: flex;
  align-items: center;
  gap: 4px;

  span {
    padding-top: 2px;
  }
`;

const ToolIcons = styled.div`
  display: flex;
  align-items: center;
  gap: 11px;

  button:last-child {
    margin-left: 7px;
  }
`;

const Browser = styled.div`
  display: flex;
  flex: 1;
  min-height: 0;
  background: #fff;
  border-top: 1px solid ${frame};
  border-bottom: 1px solid ${frame};
`;

const Tree = styled.ul`
  width: 276px;
  margin: 0;
  padding: 0;
  list-style: none;
  color: #333;
  border-right: 1px solid ${frame};
`;

const TreeRow = styled.li`
  display: flex;
  align-items: center;
  height: 20px;
  padding-left: ${({ $sub }) => ($sub ? 27 : 6)}px;
  background: ${({ $selected }) => ($selected ? chrome : 'transparent')};

  span {
    padding: 2px 0 0 9px;
  }
`;

const TreeToggle = styled.div`
  width: 17px;
`;

const FileArea = styled.div`
  position: relative;
  flex: 1;
`;

const FileTable = styled.table`
  ${tableBase};

  th {
    ${cellHead};
    height: 28px;
  }

  th:last-child {
    border-right: 0;
  }

  td {
    height: 20px;
    padding-top: 2px;
  }
`;

const SelectedFile = styled.tr`
  color: #fff;
  background: ${blue};
  outline: 1px dotted #fff;
  outline-offset: -1px;
`;

const SizeCell = styled.td`
  && {
    padding-right: 4px;
    text-align: right;
  }
`;

const FileMosaic = styled.div`
  position: absolute;
  top: 29px;
  left: -2px;
  display: grid;
  grid-template-columns: repeat(31, 1fr) 10px;
  grid-template-rows: 18px 17px 18px 18px 11px;
  width: 557px;
`;

const StaffMosaic = styled.div`
  position: absolute;
  top: 6px;
  left: 5px;
  z-index: 1;
  display: grid;
  grid-template-columns: repeat(4, 1fr);
  grid-template-rows: 18px 17px;
  width: 70px;
`;

const DialogFooter = styled.div`
  display: flex;
  align-items: center;
  height: 60px;
  padding: 0 14px;

  label {
    width: 66px;
  }
`;

const NameBox = styled.div`
  ${field};
  width: 304px;
  height: 30px;
  margin-left: 7px;
  padding-right: 5px;
`;

const TypeBox = styled.div`
  ${field};
  width: 261px;
  height: 30px;
  margin: 0 auto 0 7px;
  padding-right: 5px;
`;

const DialogButton = styled.button`
  width: 100px;
  height: 30px;
  margin-left: 7px;
  color: #333;
  background: #fff;
  border: 1px solid ${({ $primary }) => ($primary ? '#8c8c8c' : frame)};
`;

const Callout = styled.div`
  position: absolute;
  top: ${({ $y }) => $y}px;
  left: ${({ $x }) => $x}px;
  width: 40px;
  height: 40px;
  border-radius: 50%;
  font-family: 'Noto Sans', sans-serif;
  font-size: 29px;
  line-height: 40px;
  text-align: center;
  color: #fff;
  background: #e80707;
`;
